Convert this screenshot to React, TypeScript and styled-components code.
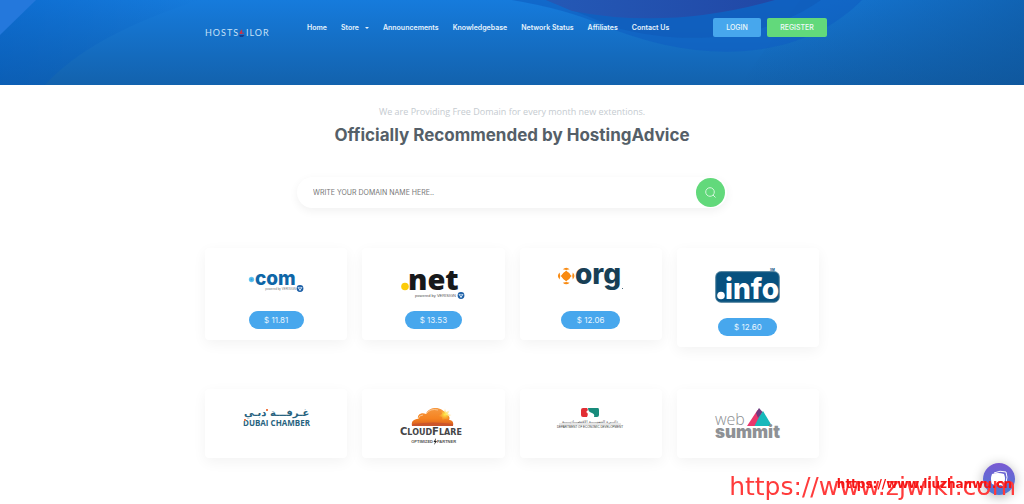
import React from "react";
import styled, { createGlobalStyle } from "styled-components";

const Global = createGlobalStyle`
  *, *::before, *::after { box-sizing: border-box; }
  body { margin: 0; background: #fff; font-family: Inter, "Open Sans", sans-serif; color: #555f68; }
  a { color: inherit; text-decoration: none; }
  button, input { font-family: inherit; }
`;

const Header = styled.header`
  position: relative;
  min-height: 85px;
  background: linear-gradient(#167bdc, #1362ad);
`;
const Waves = styled.svg`
  position: absolute;
  inset: 0;
  width: 100%;
  height: 100%;
`;
const HeaderInner = styled.div`
  position: relative;
  max-width: 630px;
  margin: 0 auto;
  padding: 18px 0 0 8px;
  display: flex;
  align-items: flex-start;
`;
const Brand = styled.a`
  display: block;
  padding-top: 9px;
  margin-right: 38px;
  line-height: 0;
`;
const Nav = styled.nav`
  flex: 1;
  display: flex;
  gap: 14px;
  font-size: 7px;
  font-weight: 600;
  line-height: 20px;
  color: #e6f2fc;
  white-space: nowrap;
`;
const NavLink = styled.a`
  display: flex;
  align-items: center;
  gap: 6px;
`;
const Caret = styled.span`
  border: 2px solid transparent;
  border-top-color: currentColor;
  border-bottom: 0;
`;
const Actions = styled.div`
  display: flex;
  gap: 6px;
`;
const Action = styled.button<{ $color: string; $wide?: boolean }>`
  width: ${(p) => (p.$wide ? 60 : 48)}px;
  height: 19px;
  padding: 0;
  border: 0;
  border-radius: 2px;
  background: ${(p) => p.$color};
  color: #f0f9fa;
  font-size: 7px;
  font-weight: 500;
`;

const Main = styled.main`
  max-width: 630px;
  margin: 0 auto;
  padding: 20px 8px 42px;
`;
const Intro = styled.p`
  margin: 0;
  font-family: "Open Sans", sans-serif;
  font-size: 9px;
  line-height: 14px;
  text-align: center;
  color: #c5cbd0;
`;
const Title = styled.h1`
  margin: 4px 0 0;
  font-size: 17px;
  font-weight: 700;
  line-height: 24px;
  text-align: center;
  color: #555f68;
`;
const Search = styled.form`
  display: flex;
  align-items: center;
  max-width: 430px;
  height: 31px;
  margin: 30px auto 40px;
  padding: 0 2px 0 16px;
  border-radius: 16px;
  background: #fff;
  box-shadow: 0 3px 10px rgba(0, 0, 0, 0.06);
`;
const SearchInput = styled.input`
  flex: 1;
  border: 0;
  outline: 0;
  padding: 0;
  background: none;
  font-size: 7px;
  color: #777;
  &::placeholder { color: #777; opacity: 1; }
`;
const SearchButton = styled.button`
  width: 29px;
  height: 29px;
  padding: 0;
  border: 0;
  border-radius: 50%;
  background: #62d97b;
  display: grid;
  place-items: center;
`;

const Grid = styled.div`
  display: grid;
  grid-template-columns: repeat(4, 1fr);
  gap: 42px 15px;
  align-items: start;
`;
const Card = styled.article`
  min-height: 69px;
  padding: 18px 0 11px;
  border-radius: 4px;
  background: #fff;
  box-shadow: 0 4px 14px rgba(0, 0, 0, 0.05);
  display: flex;
  flex-direction: column;
  align-items: center;
`;
const Logo = styled.svg`
  display: block;
  overflow: visible;
`;
const Price = styled.span<{ $width: number }>`
  width: ${(p) => p.$width}px;
  margin-top: 8px;
  border-radius: 9px;
  background: #47a7ed;
  color: #e9f5fe;
  font-size: 8px;
  line-height: 18px;
  text-align: center;
`;

const Chat = styled.button`
  position: fixed;
  right: 9px;
  bottom: 9px;
  width: 32px;
  height: 32px;
  padding: 0;
  border: 0;
  border-radius: 50%;
  background: linear-gradient(#7959d2, #4b7bd6);
  box-shadow: 0 2px 12px rgba(0, 0, 0, 0.3);
  display: grid;
  place-items: center;
`;
const Stamp = styled.a`
  position: fixed;
  right: 8px;
  bottom: 3px;
  font-family: "DejaVu Sans", sans-serif;
  font-size: 25px;
  line-height: 28px;
  color: #ff3b3b;
  white-space: nowrap;
`;
const BoldStamp = styled(Stamp)`
  right: 12px;
  bottom: 12px;
  font-size: 12px;
  font-weight: 700;
  line-height: 16px;
  color: #f51414;
`;

const VerisignMark = ({ x, y }: { x: number; y: number }) => (
  <g transform={`translate(${x} ${y})`}>
    <circle r="3.4" fill="#1d5fa6" />
    <path d="M-2-1.500 0 2 2-1.500" stroke="#d9ecfb" strokeWidth="1" fill="none" />
    <circle cy="-1" r=".7" fill="#d9ecfb" />
  </g>
);

const ComLogo = () => (
  <Logo width="65" height="37" viewBox="0 0 65 37" role="img" aria-label=".com">
    <defs>
      <radialGradient id="drop"><stop offset="0" stopColor="#2c9fe0" /><stop offset="1" stopColor="#74cdf3" /></radialGradient>
    </defs>
    <circle cx="7.500" cy="13.500" r="2.700" fill="url(#drop)" />
    <text x="11" y="19" fontFamily="Inter" fontWeight="800" fontSize="19" fill="#0e66a7">com</text>
    <text x="52" y="24" textAnchor="end" fontFamily="Liberation Sans" fontSize="3" fill="#777">powered by VERISIGN</text>
    <VerisignMark x={56} y={22.500} />
  </Logo>
);
const NetLogo = () => (
  <Logo width="65" height="37" viewBox="0 0 65 37" role="img" aria-label=".net">
    <circle cx="4" cy="20.500" r="3.800" fill="#fccb08" />
    <text x="7" y="24" fontFamily="Open Sans" fontWeight="800" fontSize="29" fill="#17191b">net</text>
    <text x="55" y="31" textAnchor="end" fontFamily="Liberation Sans" fontSize="4" fill="#555">powered by VERISIGN</text>
    <VerisignMark x={60} y={29.500} />
  </Logo>
);
const OrgLogo = () => (
  <Logo width="65" height="37" viewBox="0 0 65 37" role="img" aria-label=".org">
    <g fill="#f98b13">
      <path d="M8.200 4.500 13.700 10 8.200 15.500 2.700 10Z" />
      <circle cx="8.200" cy="10" r="4" />
      <path d="M4.800 3.300Q8.200.1 11.600 3.300L8.200 4ZM4.800 16.700Q8.200 19.900 11.600 16.700L8.200 16ZM1.600 6.600Q-1.800 10 1.600 13.400L2.200 10ZM14.800 6.600Q18.200 10 14.800 13.400L14.200 10Z" />
    </g>
    <text x="17" y="18" fontFamily="Inter" fontWeight="800" fontSize="28" fill="#183f55">org</text>
    <circle cx="64.500" cy="22.500" r=".5" fill="#183f55" />
  </Logo>
);
const InfoLogo = () => (
  <Logo width="65" height="44" viewBox="0 0 65 44" role="img" aria-label=".info">
    <rect x=".8" y="5.700" width="63.400" height="30.500" rx="5" fill="#07517f" stroke="#427895" />
    <circle cx="6" cy="29.500" r="3.800" fill="#fff" />
    <text x="10" y="33" fontFamily="Inter" fontWeight="800" fontSize="28" fill="#fff">info</text>
    <text x="55" y="4.500" fontFamily="Inter" fontWeight="700" fontSize="3" fill="#07517f">SM</text>
  </Logo>
);
const DubaiLogo = () => (
  <Logo width="67" height="24" viewBox="0 0 67 24" role="img" aria-label="Dubai Chamber">
    <text x="1" y="9" fontFamily="DejaVu Sans" fontWeight="700" fontSize="10" fill="#28637f">غـرفـــة دبـي</text>
    <text x="0" y="18.500" fontFamily="Open Sans" fontWeight="700" fontSize="8" fill="#28637f">DUBAI CHAMBER</text>
    <path d="M0 11H3V14H0Z" fill="#fff" />
    <path d="M1 12H3V14H1ZM23 2H25V4H23Z" fill="#f17b48" />
  </Logo>
);
const CloudflareLogo = () => (
  <Logo width="65" height="39" viewBox="0 0 65 39" role="img" aria-label="Cloudflare optimized partner">
    <defs>
      <linearGradient id="cloud" x2="0" y2="1"><stop stopColor="#f6983f" /><stop offset=".6" stopColor="#f58220" /><stop offset="1" stopColor="#d4581e" /></linearGradient>
      <radialGradient id="sun"><stop stopColor="#fff04a" /><stop offset="1" stopColor="#fbb92b" stopOpacity="0" /></radialGradient>
    </defs>
    <path d="M11 19C10 14 13 12 17 12C16 7 21 5 25 7C28-1 42-1 45 8C49 8 49 12 48 13C51 13 53 15 52 19Z" fill="url(#cloud)" />
    <path d="M44 1 45 5 49 3 47 7 51 8 47 10 49 13 44 12 41 14 41 10 37 9 41 7 40 3 43 5Z" fill="url(#sun)" />
    <path d="M25 7Q29 1 37 3M17 12Q18 8 22 8" stroke="#fcc58f" fill="none" />
    <path d="M12 17Q33 14 52 17V19H11Z" fill="#cb552a" />
    <text x="-1" y="28" fontFamily="DejaVu Sans" fontWeight="700" fontSize="10" fill="#454547">C<tspan fontSize="8">LOUD</tspan>F<tspan fontSize="8">LARE</tspan></text>
    <text x="32" y="36" textAnchor="end" fontFamily="Liberation Sans" fontWeight="700" fontSize="4" fill="#555">OPTIMIZED</text>
    <text x="36" y="36" fontFamily="Liberation Sans" fontWeight="700" fontSize="4" fill="#555">PARTNER</text>
    <path d="M35 31 32.500 35H34L33 38L36 34H34.500Z" fill="#222" />
  </Logo>
);
const EconomicLogo = () => (
  <Logo width="65" height="24" viewBox="0 0 65 24" role="img" aria-label="Department of Economic Development">
    <path d="M25 1H29Q31 3 28 5Q31 6 29 10H25Q23 10 23 8V3Q23 1 25 1Z" fill="#e12e34" />
    <path d="M30 1H40Q41 1 41 3V8Q41 10 39 10H36Q37 7 34 6Q30 5 30 1Z" fill="#188b7b" />
    <text x="32" y="15.500" textAnchor="middle" fontFamily="DejaVu Sans" fontSize="4" fill="#555">دائـــرة التنميـــــة الاقتصـــاديـــــة</text>
    <path d="M1 17H63" stroke="#999" strokeWidth=".5" />
    <text x="32" y="20.500" textAnchor="middle" fontFamily="Liberation Sans" fontSize="3" fill="#333">DEPARTMENT OF ECONOMIC DEVELOPMENT</text>
  </Logo>
);
const SummitLogo = () => (
  <Logo width="65" height="39" viewBox="0 0 65 39" role="img" aria-label="Web Summit">
    <path d="M32 19 42.500 3 49 10 42 19Z" fill="#eb376d" />
    <path d="M48 4 57 19H39.500L45 8Z" fill="#17b8bb" />
    <path d="M44 1 47.500 5 43 11 41 6Z" fill="#713b80" />
    <text x="0" y="18" fontFamily="Open Sans" fontWeight="300" fontSize="16" fill="#8b8e91">web</text>
    <text x="0" y="31" fontFamily="Inter" fontWeight="900" fontSize="17" fill="#8e9195">summit</text>
  </Logo>
);

const links = ["Home", "Store", "Announcements", "Knowledgebase", "Network Status", "Affiliates", "Contact Us"];
const domains = [
  { Art: ComLogo, price: "$ 11.81", width: 55 },
  { Art: NetLogo, price: "$ 13.53", width: 57 },
  { Art: OrgLogo, price: "$ 12.06", width: 59 },
  { Art: InfoLogo, price: "$ 12.60", width: 59 },
];
const partners = [DubaiLogo, CloudflareLogo, EconomicLogo, SummitLogo];

export default function App() {
  return (
    <>
      <Global />
      <Header>
        <Waves viewBox="0 0 1024 85" preserveAspectRatio="none" aria-hidden="true">
          <defs>
            <linearGradient id="left"><stop stopColor="#0058c0" stopOpacity=".4" /><stop offset="1" stopColor="#0058c0" stopOpacity="0" /></linearGradient>
            <linearGradient id="right"><stop stopColor="#0c4f91" stopOpacity="0" /><stop offset="1" stopColor="#0c4f91" stopOpacity=".55" /></linearGradient>
            <linearGradient id="violet"><stop stopColor="#2459b6" /><stop offset="1" stopColor="#2148a6" /></linearGradient>
          </defs>
          <path d="M0 0H200Q90 35 45 85H0Z" fill="url(#left)" />
          <path d="M0 0H36L0 35Z" fill="#2478dc" />
          <path d="M800 0H1024V85H740Z" fill="url(#right)" />
          <path d="M512 0H862C800 62 700 66 600 24Q565 9 512 0Z" fill="#1060c2" fillOpacity=".65" />
          <path d="M546 0H821C765 39 690 47 617 28Q580 13 546 0Z" fill="#1057b5" fillOpacity=".5" />
          <path d="M546 0H775Q670 30 572 11Z" fill="url(#violet)" />
        </Waves>
        <HeaderInner>
          <Brand href="#" aria-label="HostSailor">
            <Logo width="64" height="12" viewBox="0 0 64 12">
              <g fill="#c5e0f7" fontFamily="Lato" fontSize="9" letterSpacing="1">
                <text x="0" y="9">HOSTS</text>
                <text x="41" y="9">ILOR</text>
              </g>
              <path d="M37 2V7H34.500Q34.500 5 37 2ZM37.500 4 39 7H37.500Z" fill="#c73548" />
              <path d="M34 8H39.500L38 10H35Z" fill="#173d91" />
            </Logo>
          </Brand>
          <Nav>
            {links.map((label) => (
              <NavLink href="#" key={label}>{label}{label === "Store" && <Caret />}</NavLink>
            ))}
          </Nav>
          <Actions>
            <Action $color="#47a7ed">LOGIN</Action>
            <Action $color="#62d97b" $wide>REGISTER</Action>
          </Actions>
        </HeaderInner>
      </Header>
      <Main>
        <Intro>We are Providing Free Domain for every month new extentions.</Intro>
        <Title>Officially Recommended by HostingAdvice</Title>
        <Search onSubmit={(e) => e.preventDefault()}>
          <SearchInput type="text" aria-label="Domain name" placeholder="WRITE YOUR DOMAIN NAME HERE.." />
          <SearchButton type="submit" aria-label="Search">
            <svg width="11" height="11" viewBox="0 0 11 11" fill="none" stroke="#d4f6dc">
              <circle cx="5" cy="5" r="4.300" />
              <path d="M8 8 10.500 10.500" />
            </svg>
          </SearchButton>
        </Search>
        <Grid>
          {domains.map(({ Art, price, width }) => (
            <Card key={price}><Art /><Price $width={width}>{price}</Price></Card>
          ))}
          {partners.map((Art, i) => (
            <Card key={i}><Art /></Card>
          ))}
        </Grid>
      </Main>
      <Chat aria-label="Open chat">
        <svg width="18" height="18" viewBox="0 0 18 18">
          <path d="M4 3Q10 0 16 2Q18 7 16 13" fill="none" stroke="#fff" />
          <path d="M2 4Q8 2 14 4Q16 9 14 14L14 17L11 15Q6 16 2 14Q0 9 2 4Z" fill="#fff" />
        </svg>
      </Chat>
      <Stamp href="#">https://www.zjwiki.com</Stamp>
      <BoldStamp href="#">https://www.liuzhanwu.cn</BoldStamp>
    </>
  );
}
